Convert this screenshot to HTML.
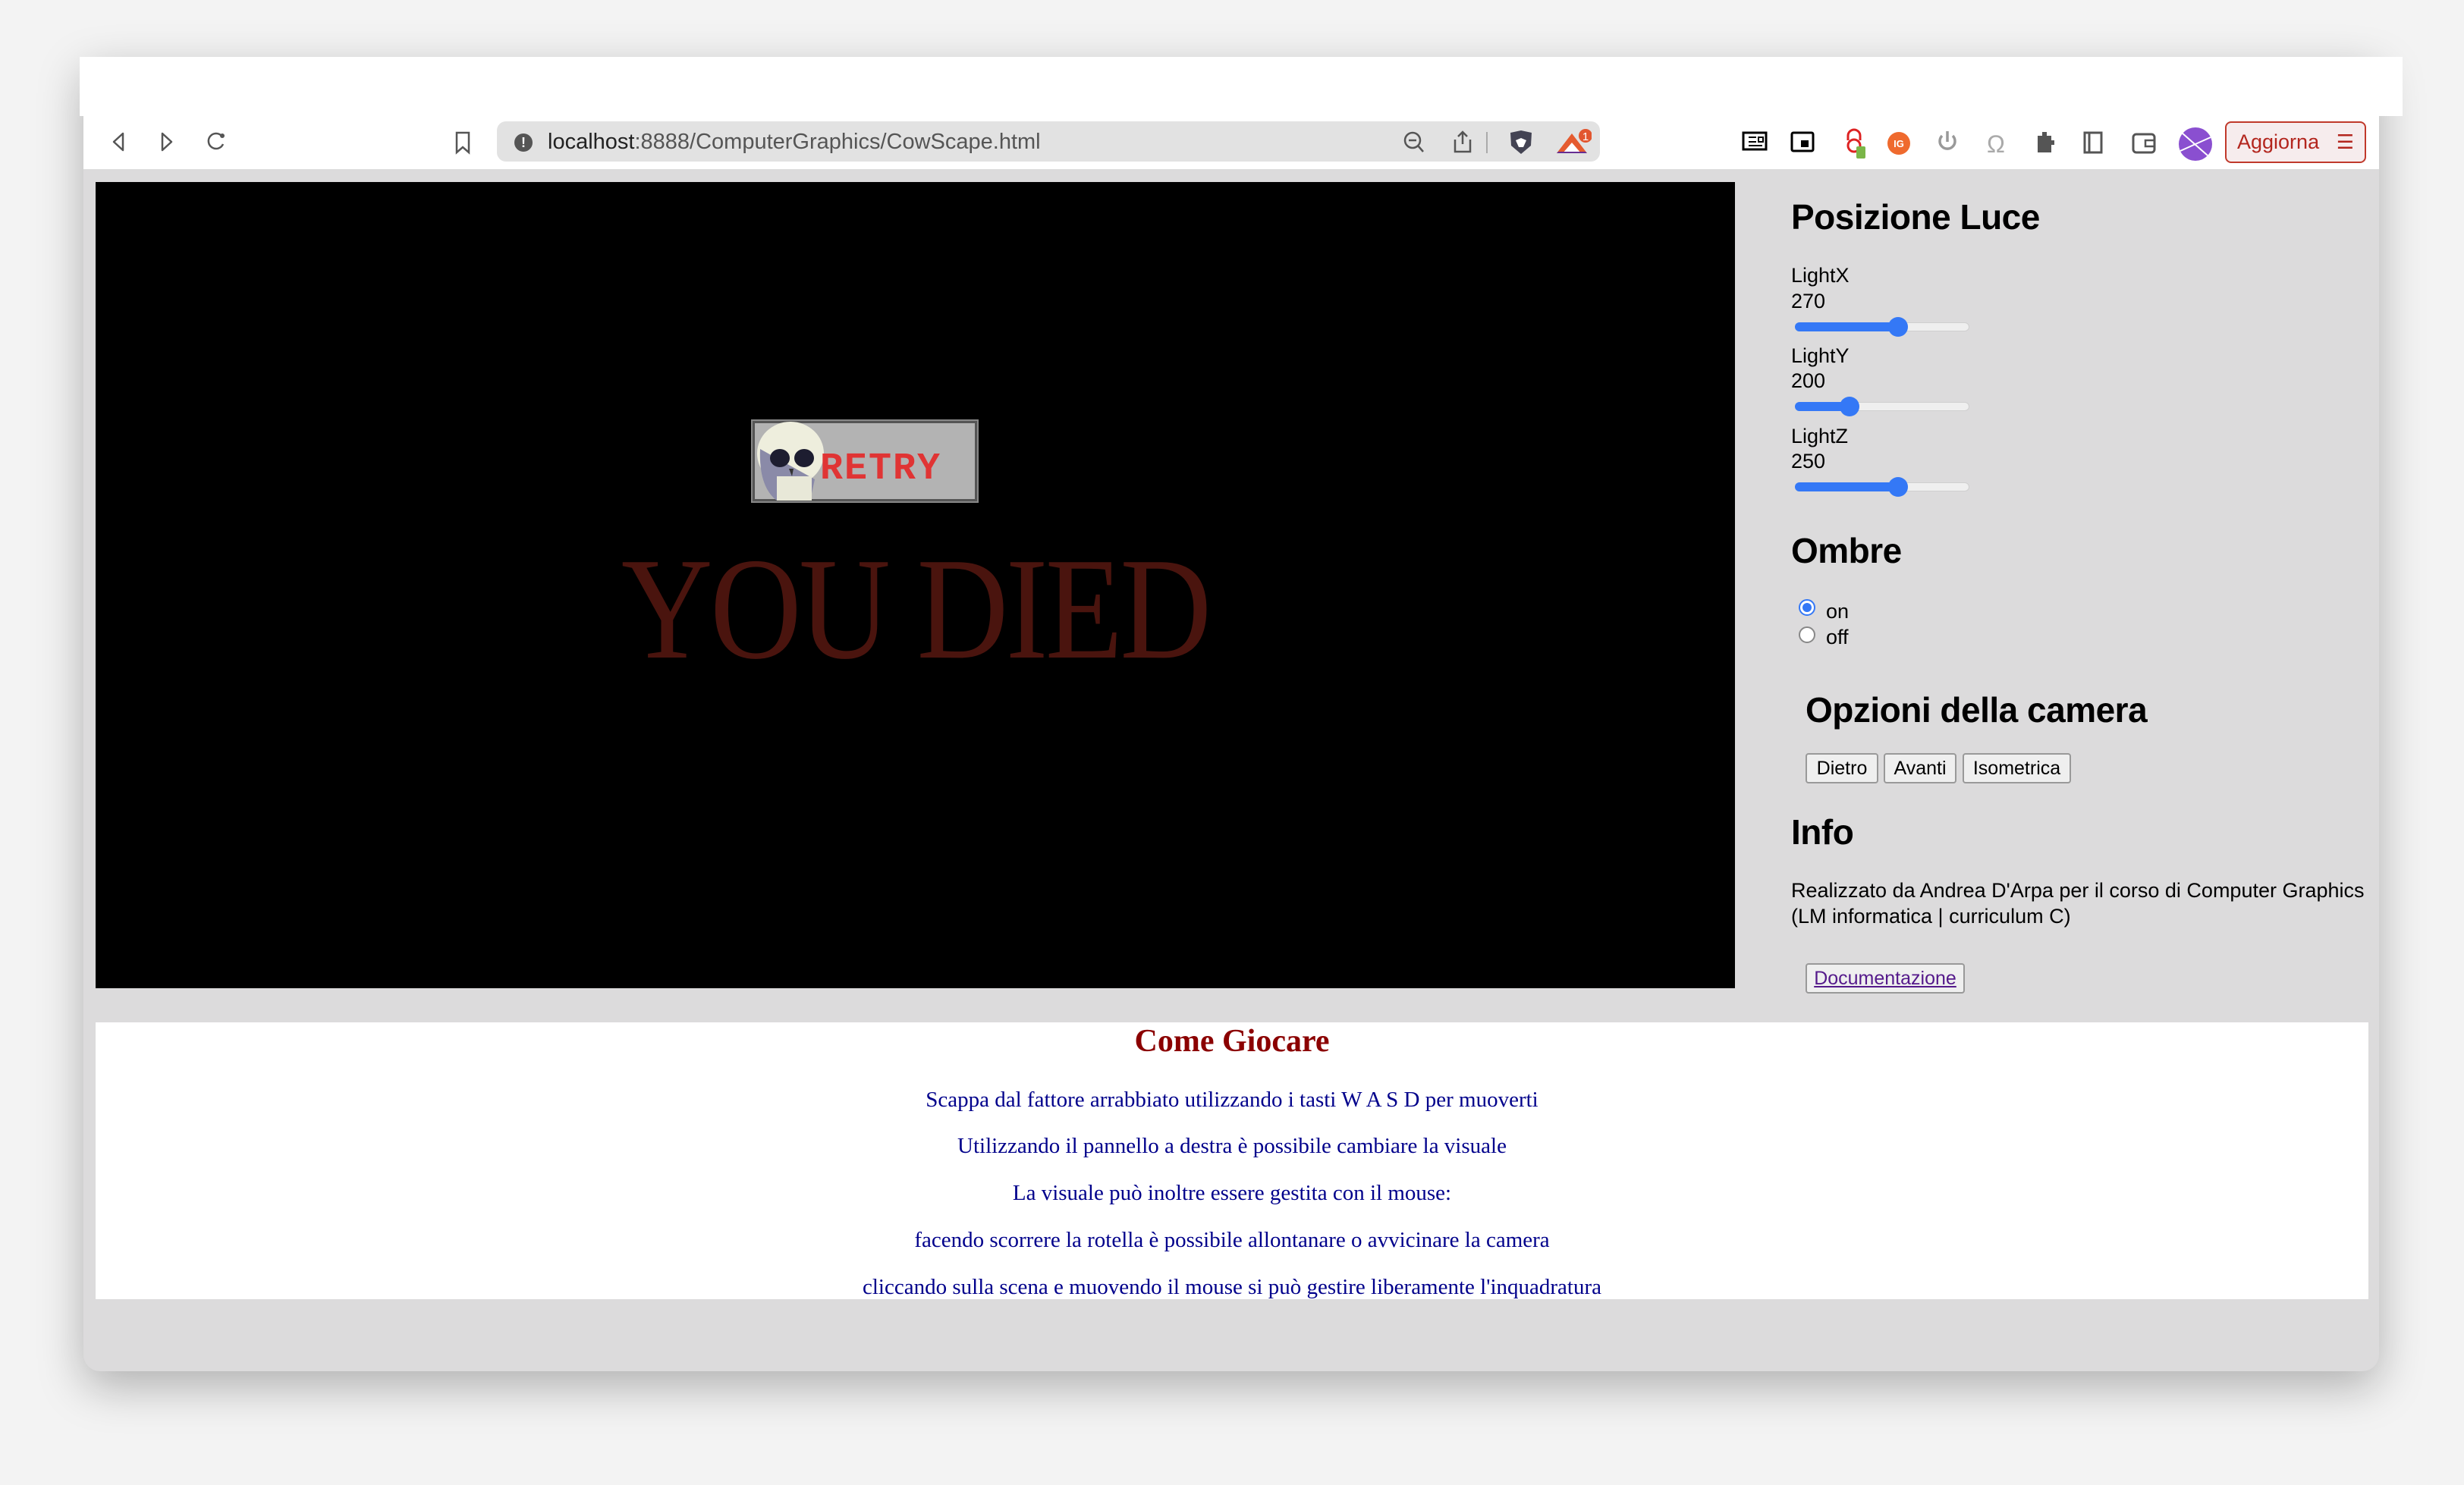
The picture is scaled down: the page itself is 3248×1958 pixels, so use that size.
<!DOCTYPE html>
<html><head><meta charset="utf-8"><style>
*{margin:0;padding:0;box-sizing:border-box}
body{width:3248px;height:1958px;background:#f3f3f3;position:relative;overflow:hidden;font-family:"Liberation Sans",sans-serif}
.abs{position:absolute}
.win{left:110px;top:75px;width:3026px;height:1733px;background:#dcdbdc;border-radius:0 0 22px 22px;box-shadow:0 20px 60px rgba(0,0,0,.28)}
.top{left:105px;top:75px;width:3062px;height:78px;background:#fff}
.tb{left:110px;top:153px;width:3026px;height:70px;background:#fff}
.url{left:655px;top:160px;width:1454px;height:53px;background:#e2e2e2;border-radius:12px}
.side{font-family:"Liberation Sans",sans-serif;color:#000}
h2{position:absolute;font-size:46px;font-weight:bold;letter-spacing:-0.5px}
.lbl{position:absolute;font-size:27px;left:2361px}
.track{position:absolute;left:2366px;width:230px;height:12px;border-radius:6px;background:#efefef;border:1px solid #cfcfcf}
.fill{position:absolute;left:2366px;height:12px;border-radius:6px;background:#3478f6}
.thumb{position:absolute;width:26px;height:26px;border-radius:50%;background:#3478f6}
.btn{position:absolute;top:993px;height:40px;background:#efefef;border:2px solid #999;border-radius:4px;font-size:25px;line-height:36px;text-align:center}
.line{position:absolute;left:126px;width:2996px;text-align:center;color:#00008b;font-family:"Liberation Serif",serif;font-size:29px}
</style></head><body>
<div class="abs win"></div>
<div class="abs top"></div>
<div class="abs tb"></div>
<svg class="abs" style="left:140px;top:170px" width="170" height="34" viewBox="0 0 170 34">
<path d="M22 6 L10 17 L22 28 Z" fill="none" stroke="#555" stroke-width="2.5" stroke-linejoin="round"/>
<path d="M74 6 L86 17 L74 28 Z" fill="none" stroke="#555" stroke-width="2.5" stroke-linejoin="round"/>
<path d="M152 9 A10 10 0 1 0 154 20" fill="none" stroke="#555" stroke-width="2.5"/><circle cx="153" cy="9" r="3" fill="#555"/>
</svg>
<svg class="abs" style="left:598px;top:172px" width="24" height="32"><path d="M4 3 H20 V29 L12 22 L4 29 Z" fill="none" stroke="#555" stroke-width="2.5"/></svg>
<div class="abs url"></div>
<div class="abs" style="left:678px;top:176px;width:24px;height:24px;border-radius:50%;background:#555;color:#fff;font-size:18px;font-weight:bold;text-align:center;line-height:24px">!</div>
<div class="abs" style="left:722px;top:171px;font-size:29px;color:#222">localhost<span style="color:#555">:8888/ComputerGraphics/CowScape.html</span></div>
<svg class="abs" style="left:1848px;top:170px" width="250" height="36">
<circle cx="14" cy="15" r="10" fill="none" stroke="#555" stroke-width="2.5"/><path d="M9 15 H19 M21 22 L28 30" stroke="#555" stroke-width="2.5"/>
<path d="M70 14 V30 H90 V14 M80 4 V20 M74 10 L80 4 L86 10" fill="none" stroke="#555" stroke-width="2.5"/>
<path d="M112 4 V32" stroke="#aaa" stroke-width="2"/>
<path d="M143 5 L157 2 L171 5 L170 22 L157 33 L144 22 Z" fill="#434353"/><path d="M150 15 L157 12 L164 15 L160 24 H154 Z" fill="#fff"/>
<path d="M224 6 L244 32 H204 Z" fill="#e55b2f"/><path d="M224 18 L236 32 H212 Z" fill="#fff"/><path d="M206 30 H242 L244 32 H204 Z" fill="#662d91"/>
<circle cx="242" cy="9" r="9" fill="#e2562f"/><text x="242" y="15" font-size="15" fill="#fff" text-anchor="middle" font-family="Liberation Sans">1</text>
</svg>
<svg class="abs" style="left:2290px;top:165px" width="640" height="50">
<rect x="8" y="10" width="30" height="22" fill="none" stroke="#000" stroke-width="3"/><path d="M15 16h10M15 22h10M15 27h18M28 16h6v6h-6z" stroke="#000" stroke-width="2" fill="none"/>
<rect x="72" y="10" width="28" height="24" rx="2" fill="none" stroke="#000" stroke-width="3"/><rect x="84" y="20" width="10" height="9" fill="#000"/>
<path d="M146 20 V14 A8 8 0 0 1 162 14 V20" stroke="#d22" stroke-width="3" fill="none"/><circle cx="154" cy="27" r="8" fill="none" stroke="#d22" stroke-width="3"/>
<rect x="157" y="28" width="12" height="16" rx="2" fill="#7ab648"/>
<circle cx="213" cy="24" r="15" fill="#ef6a2e"/><text x="213" y="29" font-size="13" font-weight="bold" fill="#fff" text-anchor="middle" font-family="Liberation Sans">IG</text>
<path d="M270 14 A10 10 0 1 0 284 14 M277 8 V22" stroke="#999" stroke-width="3.5" fill="none"/>
<text x="341" y="36" font-size="32" fill="#aaa" text-anchor="middle" font-family="Liberation Sans">Ω</text>
<path d="M396 14h6v-5h6v5h6v6h4v6h-4v10h-18z" fill="#555"/>
<rect x="458" y="10" width="22" height="26" fill="none" stroke="#555" stroke-width="3"/><path d="M464 10v26" stroke="#555" stroke-width="3"/>
<rect x="522" y="12" width="28" height="24" rx="4" fill="none" stroke="#555" stroke-width="3"/><path d="M538 20h12v8h-12z" fill="none" stroke="#555" stroke-width="2.5"/>
<circle cx="604" cy="25" r="22" fill="#8a4fd0"/><path d="M586 10 L620 40" stroke="#fff" stroke-width="2"/><path d="M584 34 L624 16" stroke="#fff" stroke-width="2"/>
</svg>
<div class="abs" style="left:2933px;top:160px;width:186px;height:55px;border:2px solid #c0392b;border-radius:8px;background:#f6eced;color:#b3261e;font-size:27px;line-height:51px;padding-left:14px">Aggiorna<span style="position:absolute;right:14px;top:0;font-size:26px">☰</span></div>
<div class="abs" style="left:126px;top:240px;width:2161px;height:1063px;background:#000;overflow:hidden">
<div class="abs" style="left:0;top:467px;width:2161px;text-align:center;font-family:'Liberation Serif',serif;font-size:192px;color:#4a140e;line-height:192px;letter-spacing:-4px"><span style="display:inline-block;transform:scaleX(.87);position:relative;left:0">YOU DIED</span></div>
<div class="abs" style="left:866px;top:315px;width:296px;height:106px;background:#b3b3b3;border:3px solid #555;outline:2px solid #888"></div>
<svg class="abs" style="left:868px;top:312px" width="100" height="112"><ellipse cx="48" cy="46" rx="44" ry="42" fill="#eeeedd"/><path d="M8 40 Q6 90 30 108 H74 L80 80 Z" fill="#8a8aa8"/><rect x="30" y="76" width="46" height="32" fill="#e8e8d8"/><ellipse cx="34" cy="52" rx="13" ry="12" fill="#1d1d30"/><ellipse cx="66" cy="52" rx="13" ry="12" fill="#1d1d30"/><path d="M46 66 L52 66 L50 76Z" fill="#333"/></svg>
<div class="abs" style="left:955px;top:350px;font-family:'Liberation Mono',monospace;font-weight:bold;font-size:50px;color:#e03434;letter-spacing:2px">RETRY</div>
</div>
<div class="side">
<h2 style="left:2361px;top:259px">Posizione Luce</h2>
<div class="lbl" style="top:348px">LightX</div><div class="lbl" style="top:382px">270</div>
<div class="track" style="top:425px"></div><div class="fill" style="top:425px;width:140px"></div><div class="thumb" style="left:2489px;top:418px"></div>
<div class="lbl" style="top:454px">LightY</div><div class="lbl" style="top:487px">200</div>
<div class="track" style="top:530px"></div><div class="fill" style="top:530px;width:75px"></div><div class="thumb" style="left:2425px;top:523px"></div>
<div class="lbl" style="top:560px">LightZ</div><div class="lbl" style="top:593px">250</div>
<div class="track" style="top:636px"></div><div class="fill" style="top:636px;width:140px"></div><div class="thumb" style="left:2489px;top:629px"></div>
<h2 style="left:2361px;top:699px">Ombre</h2>
<div class="abs" style="left:2371px;top:790px;width:22px;height:22px;border-radius:50%;border:2px solid #3478f6;background:#fff"><div style="margin:3px;width:12px;height:12px;border-radius:50%;background:#3478f6"></div></div>
<div class="lbl" style="left:2407px;top:791px">on</div>
<div class="abs" style="left:2371px;top:826px;width:22px;height:22px;border-radius:50%;border:2px solid #888;background:#fff"></div>
<div class="lbl" style="left:2407px;top:825px">off</div>
<h2 style="left:2380px;top:909px">Opzioni della camera</h2>
<div class="btn" style="left:2380px;width:96px">Dietro</div>
<div class="btn" style="left:2483px;width:96px">Avanti</div>
<div class="btn" style="left:2587px;width:143px">Isometrica</div>
<h2 style="left:2361px;top:1070px">Info</h2>
<div class="lbl" style="top:1159px">Realizzato da Andrea D'Arpa per il corso di Computer Graphics</div>
<div class="lbl" style="top:1193px">(LM informatica | curriculum C)</div>
<div class="btn" style="left:2380px;top:1270px;width:210px;color:#551a8b;text-decoration:underline">Documentazione</div>
</div>
<div class="abs" style="left:126px;top:1348px;width:2996px;height:365px;background:#fff"></div>
<div class="line" style="top:1349px;color:#8b0000;font-weight:bold;font-size:42px">Come Giocare</div>
<div class="line" style="top:1434px">Scappa dal fattore arrabbiato utilizzando i tasti W A S D per muoverti</div>
<div class="line" style="top:1495px">Utilizzando il pannello a destra è possibile cambiare la visuale</div>
<div class="line" style="top:1557px">La visuale può inoltre essere gestita con il mouse:</div>
<div class="line" style="top:1619px">facendo scorrere la rotella è possibile allontanare o avvicinare la camera</div>
<div class="line" style="top:1681px">cliccando sulla scena e muovendo il mouse si può gestire liberamente l'inquadratura</div>
</body></html>
